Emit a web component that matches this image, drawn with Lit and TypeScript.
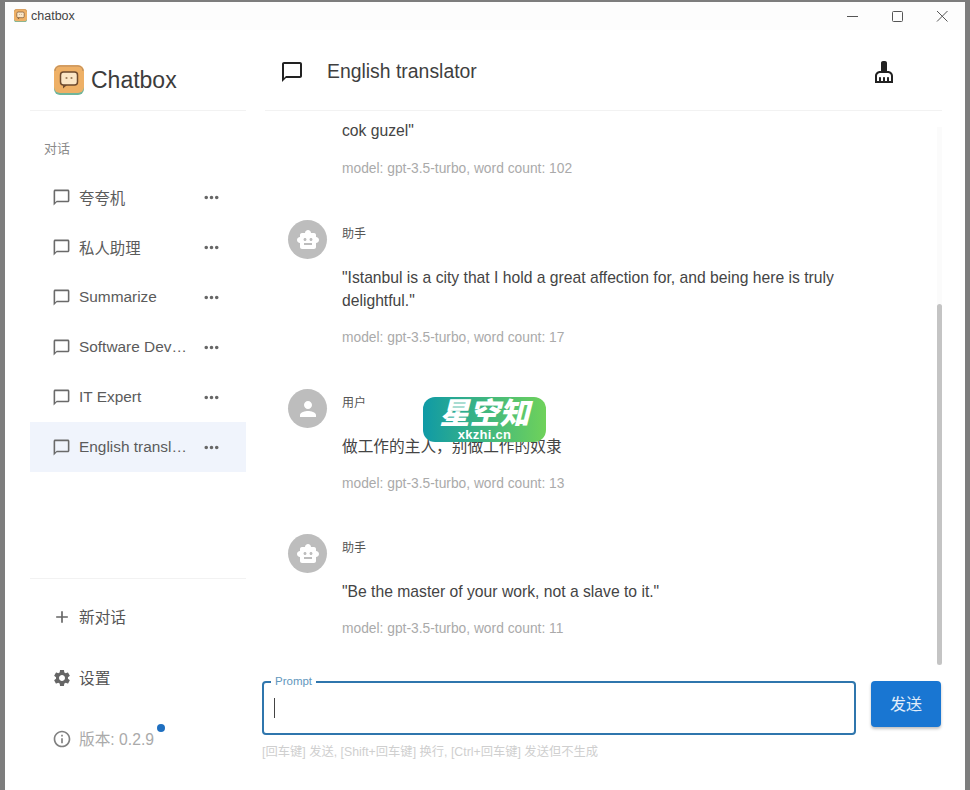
import { LitElement, html, css, svg } from "lit";
import { customElement } from "lit/decorators.js";

const P = {
  chat: "M20 2H4c-1.1 0-2 .9-2 2v18l4-4h14c1.1 0 2-.9 2-2V4c0-1.1-.9-2-2-2zm0 14H6l-2 2V4h16v12z",
  more: "M6 10c-1.1 0-2 .9-2 2s.9 2 2 2 2-.9 2-2-.9-2-2-2zm12 0c-1.1 0-2 .9-2 2s.9 2 2 2 2-.9 2-2-.9-2-2-2zm-6 0c-1.1 0-2 .9-2 2s.9 2 2 2 2-.9 2-2-.9-2-2-2z",
  add: "M19 13h-6v6h-2v-6H5v-2h6V5h2v6h6v2z",
  gear: "M19.14 12.94c.04-.3.06-.61.06-.94 0-.32-.02-.64-.07-.94l2.03-1.58c.18-.14.23-.41.12-.61l-1.92-3.32c-.12-.22-.37-.29-.59-.22l-2.39.96c-.5-.38-1.03-.7-1.62-.94l-.36-2.54c-.04-.24-.24-.41-.48-.41h-3.84c-.24 0-.43.17-.47.41l-.36 2.54c-.59.24-1.13.57-1.62.94l-2.39-.96c-.22-.08-.47 0-.59.22L2.74 8.87c-.12.21-.08.47.12.61l2.03 1.58c-.05.3-.09.63-.09.94s.02.64.07.94l-2.03 1.58c-.18.14-.23.41-.12.61l1.92 3.32c.12.22.37.29.59.22l2.39-.96c.5.38 1.03.7 1.62.94l.36 2.54c.05.24.24.41.48.41h3.84c.24 0 .44-.17.47-.41l.36-2.54c.59-.24 1.13-.56 1.62-.94l2.39.96c.22.08.47 0 .59-.22l1.92-3.32c.12-.22.07-.47-.12-.61l-2.01-1.58zM12 15.6c-1.98 0-3.6-1.62-3.6-3.6s1.62-3.6 3.6-3.6 3.6 1.62 3.6 3.6-1.62 3.6-3.6 3.6z",
  info: "M11 7h2v2h-2zm0 4h2v6h-2zm1-9C6.48 2 2 6.48 2 12s4.48 10 10 10 10-4.48 10-10S17.52 2 12 2zm0 18c-4.41 0-8-3.59-8-8s3.59-8 8-8 8 3.59 8 8-3.59 8-8 8z",
  person: "M12 12c2.21 0 4-1.79 4-4s-1.79-4-4-4-4 1.79-4 4 1.79 4 4 4zm0 2c-2.67 0-8 1.34-8 4v2h16v-2c0-2.66-5.33-4-8-4z",
  robot: "M20 9V7c0-1.1-.9-2-2-2h-3c0-1.66-1.34-3-3-3S9 3.34 9 5H6c-1.1 0-2 .9-2 2v2c-1.66 0-3 1.34-3 3s1.34 3 3 3v4c0 1.1.9 2 2 2h12c1.1 0 2-.9 2-2v-4c1.66 0 3-1.34 3-3s-1.34-3-3-3zM7.5 11.5c0-.83.67-1.5 1.5-1.5s1.5.67 1.5 1.5S9.83 13 9 13s-1.5-.67-1.5-1.5zM16 17H8v-2h8v2zm-1-4c-.83 0-1.5-.67-1.5-1.5S14.17 10 15 10s1.5.67 1.5 1.5S15.83 13 15 13z",
  broom: "M16 11h-1V3c0-1.1-.9-2-2-2h-2c-1.1 0-2 .9-2 2v8H8c-2.76 0-5 2.24-5 5v7h18v-7c0-2.76-2.24-5-5-5zm3 10h-2v-3c0-.55-.45-1-1-1s-1 .45-1 1v3h-2v-3c0-.55-.45-1-1-1s-1 .45-1 1v3H9v-3c0-.55-.45-1-1-1s-1 .45-1 1v3H5v-5c0-1.65 1.35-3 3-3h8c1.65 0 3 1.35 3 3v5z",
};

const icon = (d: string, cls = "") =>
  html`<svg class="ic ${cls}" viewBox="0 0 24 24">${svg`<path d=${d}></path>`}</svg>`;

const logo = (cls: string) => html`<svg class=${cls} viewBox="0 0 30 30">
  ${svg`<rect x="0" y="1" width="30" height="29" rx="6" fill="#6fb59b"></rect>
  <rect x="0" y="0" width="30" height="28" rx="6" fill="#eeb066"></rect>
  <path d="M1 6a5 5 0 0 1 5-5h18a5 5 0 0 1 5 5" fill="none" stroke="#b98a5c" stroke-width="1"></path>
  <rect x="6.5" y="7" width="17" height="13" rx="3" fill="#fbe6c6" stroke="#6e4a2e" stroke-width="1.5"></rect>
  <path d="M9 20v3.5l4-3.5z" fill="#6e4a2e"></path>
  <circle cx="12.5" cy="13" r="1.1" fill="#9a7a5a"></circle><circle cx="17.5" cy="13" r="1.1" fill="#9a7a5a"></circle>`}
</svg>`;

const sessions = ["夸夸机", "私人助理", "Summarize", "Software Developer", "IT Expert", "English translator"];

@customElement("app-root")
export class AppRoot extends LitElement {
  static styles = css`
    :host {
      display: block;
      width: 970px;
      height: 790px;
      font-family: "Liberation Sans", "Noto Sans CJK SC", sans-serif;
      color: #333;
    }
    .frame {
      height: 100%;
      box-sizing: border-box;
      padding: 2px 5px 0;
      background: #7d7d7d;
    }
    .window {
      position: relative;
      height: 100%;
      background: #fff;
      display: flex;
      flex-direction: column;
      overflow: hidden;
    }
    .ic { width: 24px; height: 24px; fill: currentColor; flex: none; display: block; }
    .titlebar {
      height: 28px;
      flex: none;
      display: flex;
      align-items: center;
      background: #fdfdfd;
      padding: 0 0 1px 9px;
      box-sizing: border-box;
      font-size: 12.5px;
      color: #444;
      gap: 4px;
    }
    .app-ic { width: 13px; height: 13px; }
    .win-btns { margin-left: auto; display: flex; align-items: center; }
    .win-btns svg { width: 45px; height: 12px; fill: none; stroke: #555; stroke-width: 1; display: block; }
    .body { flex: 1; display: flex; min-height: 0; }

    .side {
      width: 216px;
      margin-left: 25px;
      display: flex;
      flex-direction: column;
      flex: none;
    }
    .brand {
      height: 81px;
      box-sizing: border-box;
      border-bottom: 1px solid #f2f2f2;
      display: flex;
      align-items: center;
      gap: 7px;
      padding: 20px 0 0 24px;
      font-size: 23px;
      color: #3c3c3c;
    }
    .brand-ic { width: 30px; height: 30px; }
    .label { font-size: 13px; color: #8a8a8a; padding: 29px 0 0 14px; height: 32px; line-height: 18px; }
    .item {
      height: 50px;
      display: flex;
      align-items: center;
      padding: 0 24px 0 22px;
      gap: 8px;
      font-size: 15.4px;
      color: #5b5b5b;
    }
    .item.on { background: #f0f4fc; }
    .item .chat { width: 19px; height: 19px; color: #6a6a6a; }
    .item .name { flex: 1; min-width: 0; white-space: nowrap; overflow: hidden; text-overflow: ellipsis; }
    .item .more { width: 21px; height: 21px; color: #666; margin-left: 4px; }
    .foot {
      margin-top: auto;
      border-top: 1px solid #f2f2f2;
      padding: 7px 0 21px 22px;
      display: flex;
      flex-direction: column;
    }
    .foot-row {
      height: 61px;
      display: flex;
      align-items: center;
      gap: 7px;
      font-size: 15.7px;
      color: #555;
    }
    .foot-row .ic { width: 20px; height: 20px; color: #666; }
    .ver { color: #aaa; position: relative; width: fit-content; }
    .ver .ic { color: #808080; }
    .dot {
      position: absolute;
      width: 8px;
      height: 8px;
      border-radius: 50%;
      background: #1f6fc0;
      left: 105px;
      top: 16px;
    }

    .main { flex: 1; min-width: 0; display: flex; flex-direction: column; padding: 0 23px 0 16px; }
    .head {
      height: 81px;
      box-sizing: border-box;
      flex: none;
      margin-left: 3px;
      border-bottom: 1px solid #f2f2f2;
      display: flex;
      align-items: center;
      padding: 3px 46px 0 15px;
      gap: 23px;
      font-size: 19.4px;
      color: #3f3f3f;
    }
    .head .ic { color: #222; }
    .head .broom { margin-left: auto; margin-top: 1px; }
    .scroll { flex: 1; min-height: 0; display: flex; margin-left: 3px; }
    .msgs { flex: 1; min-width: 0; overflow: hidden; padding: 8px 0 0 23px; }
    .msg { display: flex; gap: 15px; height: 169px; box-sizing: border-box; }
    .msg.one { height: 145px; }
    .msg.cut { height: 101px; padding-left: 54px; display: block; }
    .msg.cut .meta { margin-top: 18px; }
    .avatar {
      width: 39px;
      height: 39px;
      border-radius: 50%;
      background: #bdbdbd;
      color: #fff;
      display: flex;
      align-items: center;
      justify-content: center;
      flex: none;
    }
    .avatar .ic { width: 24px; height: 24px; }
    .who { font-size: 12px; color: #555; line-height: 16px; padding-top: 6px; height: 40px; }
    .text { font-size: 15.7px; line-height: 23px; color: #444; max-width: 550px; }
    .meta { font-size: 13.8px; color: #aaa; line-height: 18px; margin-top: 16.5px; }
    .bar { width: 5px; flex: none; padding-top: 177px; box-sizing: border-box; margin-top: 16px; background: #fbfbfb; height: 538px; }
    .thumb { height: 100%; background: #c4c4c4; border-radius: 3px; }

    .compose { flex: none; display: flex; gap: 15px; align-items: flex-start; padding-top: 17px; }
    .field {
      position: relative;
      flex: 1;
      height: 54px;
      box-sizing: border-box;
      border: 2px solid #2f76ad;
      border-radius: 4px;
    }
    .field label {
      position: absolute;
      left: 7px;
      top: -9px;
      padding: 0 4px;
      background: #fff;
      font-size: 11.5px;
      line-height: 14px;
      color: #5f97bd;
    }
    .caret { position: absolute; left: 10px; top: 15px; width: 1px; height: 20px; background: #444; }
    .send {
      width: 70px;
      height: 46px;
      margin-right: 1px;
      border: 0;
      border-radius: 4px;
      background: #1976d2;
      color: #e3eefa;
      font: inherit;
      font-size: 16px;
      box-shadow: 0 2px 3px rgba(0,0,0,.25);
      padding: 0 0 2px;
    }
    .hint { font-size: 12.3px; color: #cfcfcf; line-height: 16px; padding: 9px 0 30px; flex: none; }

    .mark {
      position: absolute;
      left: 418px;
      top: 395px;
      width: 123px;
      height: 45px;
      border-radius: 12px;
      background: linear-gradient(90deg, #0f9aa6, #6fd25a);
      color: #fff;
      text-align: center;
      overflow: hidden;
    }
    .mark b { display: block; font-size: 30px; line-height: 31px; font-style: italic; font-weight: 900; padding-top: 1px; }
    .mark span { display: block; font-size: 13px; line-height: 12px; font-weight: 700; letter-spacing: .3px; }
  `;

  private msg(kind: "a" | "u", who: string, text: unknown, count: number, one = true) {
    return html`<div class="msg ${one ? "one" : ""}">
      <div class="avatar">${icon(kind === "a" ? P.robot : P.person)}</div>
      <div>
        <div class="who">${who}</div>
        <div class="text">${text}</div>
        <div class="meta">model: gpt-3.5-turbo, word count: ${count}</div>
      </div>
    </div>`;
  }

  render() {
    return html`<div class="frame"><div class="window">
      <div class="titlebar">
        ${logo("app-ic")}<span>chatbox</span>
        <div class="win-btns">
          <svg viewBox="0 0 45 12"><path d="M17 6.5h11"></path></svg>
          <svg viewBox="0 0 45 12"><rect x="17.5" y="1.5" width="10" height="10" rx="1"></rect></svg>
          <svg viewBox="0 0 45 12"><path d="M17 1l10.5 10.5M27.5 1L17 11.5"></path></svg>
        </div>
      </div>
      <div class="body">
        <aside class="side">
          <div class="brand">${logo("brand-ic")}<span>Chatbox</span></div>
          <div class="label">对话</div>
          ${sessions.map((s, i) => html`<div class="item ${i === 5 ? "on" : ""}">
            ${icon(P.chat, "chat")}<span class="name">${s}</span>${icon(P.more, "more")}
          </div>`)}
          <div class="foot">
            <div class="foot-row">${icon(P.add)}<span>新对话</span></div>
            <div class="foot-row">${icon(P.gear)}<span>设置</span></div>
            <div class="foot-row ver">${icon(P.info)}<span>版本: 0.2.9</span><i class="dot"></i></div>
          </div>
        </aside>
        <main class="main">
          <div class="head">${icon(P.chat)}<span>English translator</span>${icon(P.broom, "broom")}</div>
          <div class="scroll">
            <div class="msgs">
              <div class="msg cut">
                <div class="text">cok guzel"</div>
                <div class="meta">model: gpt-3.5-turbo, word count: 102</div>
              </div>
              ${this.msg("a", "助手", `"Istanbul is a city that I hold a great affection for, and being here is truly delightful."`, 17, false)}
              ${this.msg("u", "用户", "做工作的主人，别做工作的奴隶", 13)}
              ${this.msg("a", "助手", `"Be the master of your work, not a slave to it."`, 11)}
            </div>
            <div class="bar"><div class="thumb"></div></div>
          </div>
          <div class="compose">
            <div class="field"><label>Prompt</label><i class="caret"></i></div>
            <button class="send">发送</button>
          </div>
          <div class="hint">[回车键] 发送, [Shift+回车键] 换行, [Ctrl+回车键] 发送但不生成</div>
        </main>
      </div>
      <div class="mark"><b>星空知</b><span>xkzhi.cn</span></div>
    </div></div>`;
  }
}
